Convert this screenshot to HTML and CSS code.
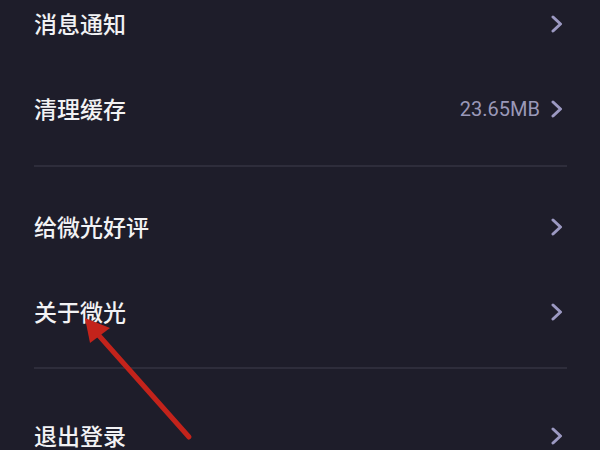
FILE: index.html
```html
<!DOCTYPE html>
<html lang="zh-CN">
<head>
<meta charset="utf-8">
<link rel="stylesheet" href="styles.css">
</head>
<body>
<div class="page">
  <div class="list">
    <div class="row"><span class="label">消息通知</span><span class="right"><svg class="chev" viewBox="0 0 12 18"><path d="M2 2 L9.5 9 L2 16" /></svg></span></div>
    <div class="row"><span class="label">清理缓存</span><span class="right"><span class="value">23.65MB</span><svg class="chev" viewBox="0 0 12 18"><path d="M2 2 L9.5 9 L2 16" /></svg></span></div>
    <div class="divider d1"></div>
    <div class="row"><span class="label">给微光好评</span><span class="right"><svg class="chev" viewBox="0 0 12 18"><path d="M2 2 L9.5 9 L2 16" /></svg></span></div>
    <div class="row"><span class="label">关于微光</span><span class="right"><svg class="chev" viewBox="0 0 12 18"><path d="M2 2 L9.5 9 L2 16" /></svg></span></div>
    <div class="divider d2"></div>
    <div class="row last"><span class="label">退出登录</span><span class="right"><svg class="chev" viewBox="0 0 12 18"><path d="M2 2 L9.5 9 L2 16" /></svg></span></div>
  </div>
  <svg class="arrow" viewBox="0 0 600 450" width="600" height="450">
    <line x1="189" y1="437" x2="94" y2="330" />
    <polygon points="85,318 110,328 90,343" />
  </svg>
</div>
</body>
</html>
```
FILE: styles.css
```css
html, body {
  margin: 0;
  padding: 0;
  background: #1e1d2a;
  overflow: hidden;
}
.page {
  position: relative;
  width: 600px;
  height: 450px;
  overflow: hidden;
  font-family: "Noto Sans CJK SC", "Noto Sans", sans-serif;
}
.list {
  display: flex;
  flex-direction: column;
  margin-top: -19px;
}
.row {
  height: 85px;
  display: flex;
  align-items: center;
  justify-content: space-between;
  padding: 0 37px 0 34px;
}
.row.last { height: 28px; }
.label {
  color: #f2f2f4;
  font-size: 23px;
  font-weight: 500;
  line-height: 1.2;
}
.right {
  display: flex;
  align-items: center;
  gap: 11px;
}
.value {
  color: #9a98b8;
  font-family: Roboto, "Liberation Sans", sans-serif;
  font-size: 20px;
  line-height: 1.2;
}
.chev {
  width: 12px;
  height: 18px;
  fill: none;
  stroke: #9c99c2;
  stroke-width: 3;
  stroke-linecap: round;
  stroke-linejoin: round;
}
.divider {
  height: 2px;
  background: #2e2d3b;
  margin: 0 33px 0 34px;
}
.d1 { margin-top: 14px; margin-bottom: 17px; }
.d2 { margin-top: 13px; margin-bottom: 53px; }
.arrow {
  position: absolute;
  left: 0;
  top: 0;
  pointer-events: none;
}
.arrow line {
  stroke: #c3231b;
  stroke-width: 5;
  stroke-linecap: round;
}
.arrow polygon {
  fill: #c3231b;
}
```
